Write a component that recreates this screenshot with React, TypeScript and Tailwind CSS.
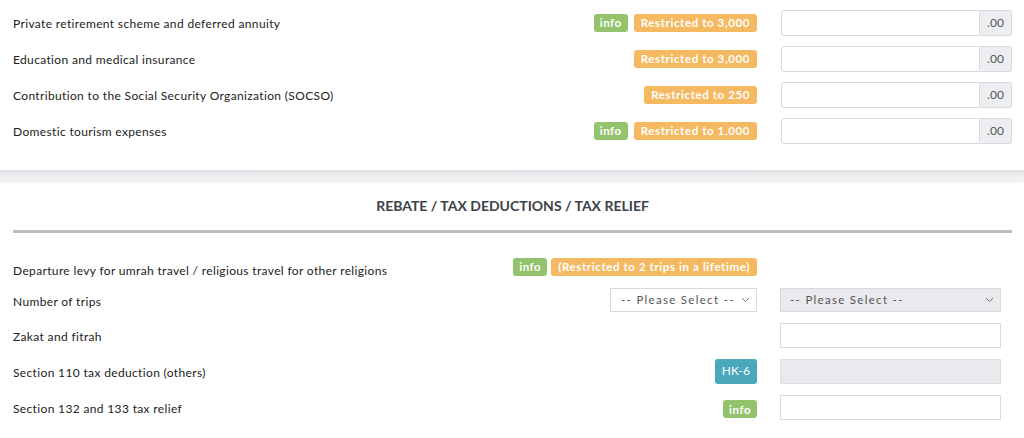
import React from "react";

const Info = () => (
  <span className="inline-flex items-center h-[18px] px-[6px] rounded-[3px] bg-[#93c36d] text-white text-[11.5px] font-bold tracking-[0.5px] leading-none">
    info
  </span>
);
const Restrict = ({ children }: { children: React.ReactNode }) => (
  <span className="inline-flex items-center h-[18px] px-[7px] rounded-[3px] bg-[#f5b962] text-white text-[11.5px] font-bold tracking-[0.6px] leading-none">
    {children}
  </span>
);

const MoneyInput = () => (
  <div className="flex w-[231px] h-[26px]">
    <div className="flex-1 border border-[#d8dadd] rounded-l-[3px] bg-white" />
    <div className="w-[32px] flex items-center justify-center border border-l-0 border-[#d8dadd] rounded-r-[3px] bg-[#eceef1] text-[12px] text-[#555]">
      .00
    </div>
  </div>
);

const Chevron = () => (
  <svg width="9" height="6" viewBox="0 0 9 6" className="text-[#777]">
    <path d="M1 1l3.5 3.5L8 1" fill="none" stroke="currentColor" strokeWidth="1" />
  </svg>
);

const label = "flex-1 text-[12px] text-[#222] tracking-[0.35px]";

const TopRow = ({ text, info, restrict }: { text: string; info?: boolean; restrict: string }) => (
  <div className="flex items-center h-[36px]">
    <div className={`${label} pt-[2px]`}>{text}</div>
    <div className="flex items-center gap-[6px] mr-[24px]">
      {info && <Info />}
      <Restrict>{restrict}</Restrict>
    </div>
    <MoneyInput />
  </div>
);

export default function App() {
  return (
    <div className="w-[1024px] h-[438px] overflow-hidden bg-white" style={{ fontFamily: "Lato, 'Noto Sans', sans-serif" }}>
      <div className="pl-[13px] pr-[12px] pt-[5px] h-[170px] bg-white">
        <TopRow text="Private retirement scheme and deferred annuity" info restrict="Restricted to 3,000" />
        <TopRow text="Education and medical insurance" restrict="Restricted to 3,000" />
        <TopRow text="Contribution to the Social Security Organization (SOCSO)" restrict="Restricted to 250" />
        <TopRow text="Domestic tourism expenses" info restrict="Restricted to 1,000" />
      </div>
      <div className="h-[13px] bg-gradient-to-b from-[#dfe1e4] via-[#eceef0] to-[#f4f5f7]" />
      <div className="pl-[13px] pr-[23px]">
        <div className="h-[47px] flex items-end justify-center pb-[14px] text-[14px] font-bold text-[#3b4249] mr-[-11px]">
          REBATE / TAX DEDUCTIONS / TAX RELIEF
        </div>
        <div className="h-[3px] bg-[#bdbdbd] mr-[-11px]" />
        <div className="flex items-center h-[46px] pt-[21px]">
          <div className={`${label} pt-[9px]`}>
            Departure levy for umrah travel / religious travel for other religions
          </div>
          <div className="flex items-center gap-[4px] mr-[244px]">
            <Info />
            <Restrict>(Restricted to 2 trips in a lifetime)</Restrict>
          </div>
        </div>
        <div className="flex items-center h-[34px] mt-[4px]">
          <div className={`${label} pt-[3px]`}>Number of trips</div>
          <div className="w-[147px] h-[24px] mr-[23px] flex items-center justify-between pl-[10px] pr-[6px] border border-[#d8dadd] bg-white text-[11.5px] text-[#555] tracking-[1.3px]">
            <span>-- Please Select --</span>
            <Chevron />
          </div>
          <div className="w-[221px] h-[24px] flex items-center justify-between pl-[9px] pr-[6px] border border-[#d8dadd] bg-[#e8eaed] text-[11.5px] text-[#555] tracking-[1.3px]">
            <span>-- Please Select --</span>
            <Chevron />
          </div>
        </div>
        <div className="flex items-center h-[36px]">
          <div className={`${label} pt-[3px]`}>Zakat and fitrah</div>
          <div className="w-[221px] h-[25px] border border-[#d8dadd] bg-white" />
        </div>
        <div className="flex items-center h-[36px]">
          <div className={`${label} pt-[3px]`}>Section 110 tax deduction (others)</div>
          <span className="inline-flex items-center h-[25px] px-[7px] mr-[23px] rounded-[3px] bg-[#4ba7bc] text-white text-[12px] leading-none">
            HK-6
          </span>
          <div className="w-[221px] h-[25px] border border-[#dcdee1] bg-[#e8eaed]" />
        </div>
        <div className="flex items-center h-[37px]">
          <div className={`${label} pt-[3px]`}>Section 132 and 133 tax relief</div>
          <div className="mr-[23px]">
            <Info />
          </div>
          <div className="w-[221px] h-[25px] border border-[#d8dadd] bg-white" />
        </div>
      </div>
    </div>
  );
}
